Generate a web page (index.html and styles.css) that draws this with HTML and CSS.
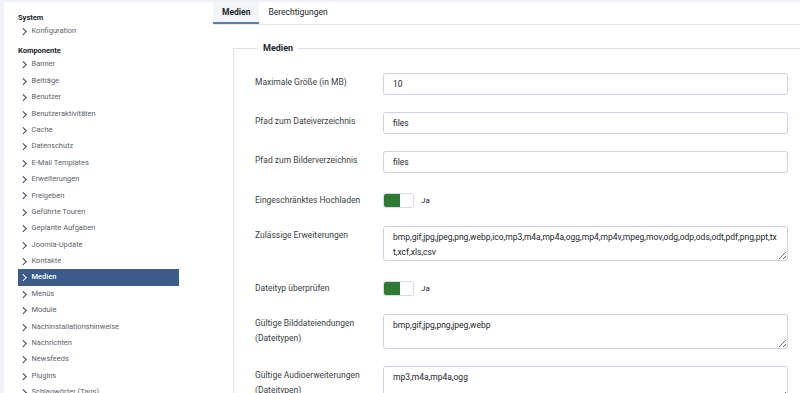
FILE: index.html
```html
<!DOCTYPE html>
<html lang="de">
<head>
    <meta charset="UTF-8">
    <title>Globale Konfiguration: Medien</title>
    <link rel="stylesheet" href="styles.css">
</head>
<body>
    <div class="page">
        <div class="sidebar">
            <h4>System</h4>
            <ul>
                <li><a href="">Konfiguration</a></li>
            </ul>
            <h4>Komponente</h4>
            <ul>
                <li><a href="">Banner</a></li>
                <li><a href="">Beiträge</a></li>
                <li><a href="">Benutzer</a></li>
                <li><a href="">Benutzeraktivitäten</a></li>
                <li><a href="">Cache</a></li>
                <li><a href="">Datenschutz</a></li>
                <li><a href="">E-Mail Templates</a></li>
                <li><a href="">Erweiterungen</a></li>
                <li><a href="">Freigeben</a></li>
                <li><a href="">Geführte Touren</a></li>
                <li><a href="">Geplante Aufgaben</a></li>
                <li><a href="">Joomla-Update</a></li>
                <li><a href="">Kontakte</a></li>
                <li class="active"><a href="">Medien</a></li>
                <li><a href="">Menüs</a></li>
                <li><a href="">Module</a></li>
                <li><a href="">Nachinstallationshinweise</a></li>
                <li><a href="">Nachrichten</a></li>
                <li><a href="">Newsfeeds</a></li>
                <li><a href="">Plugins</a></li>
                <li><a href="">Schlagwörter (Tags)</a></li>
            </ul>
        </div>
        <div class="main">
            <div class="tabs">
                <span class="tab current">Medien</span>
                <span class="tab">Berechtigungen</span>
            </div>
            <fieldset class="options">
                <legend>Medien</legend>
                <div class="row">
                    <label>Maximale Größe (in MB)</label>
                    <input type="text" value="10">
                </div>
                <div class="row">
                    <label>Pfad zum Dateiverzeichnis</label>
                    <input type="text" value="files">
                </div>
                <div class="row">
                    <label>Pfad zum Bilderverzeichnis</label>
                    <input type="text" value="files">
                </div>
                <div class="row toggle">
                    <label>Eingeschränktes Hochladen</label>
                    <div class="switch"><span class="track"><span class="on"></span></span>Ja</div>
                </div>
                <div class="row">
                    <label>Zulässige Erweiterungen</label>
                    <textarea rows="2">bmp,gif,jpg,jpeg,png,webp,ico,mp3,m4a,mp4a,ogg,mp4,mp4v,mpeg,mov,odg,odp,ods,odt,pdf,png,ppt,txt,xcf,xls,csv</textarea>
                </div>
                <div class="row toggle">
                    <label>Dateityp überprüfen</label>
                    <div class="switch"><span class="track"><span class="on"></span></span>Ja</div>
                </div>
                <div class="row">
                    <label>Gültige Bilddateiendungen<br>(Dateitypen)</label>
                    <textarea rows="2">bmp,gif,jpg,png,jpeg,webp</textarea>
                </div>
                <div class="row">
                    <label>Gültige Audioerweiterungen<br>(Dateitypen)</label>
                    <textarea rows="2">mp3,m4a,mp4a,ogg</textarea>
                </div>
            </fieldset>
        </div>
    </div>
</body>
</html>
```

FILE: styles.css
```css
*{
    margin:0;
    padding:0;
    box-sizing:border-box;
}
html,body{
    height:100%;
    overflow:hidden;
}
body{
    background:#eef2f8;
    font-family:Roboto,"Liberation Sans",sans-serif;
    color:#22262a;
}
.page{
    display:flex;
    height:100%;
    margin:2px 0 0 4px;
    background:#fff;
}
.sidebar{
    width:193px;
    flex:none;
    padding:10px 18px 0 14px;
    background:#fff;
}
.sidebar h4{
    font-size:7.5px;
    font-weight:700;
    line-height:11px;
    color:#22262a;
}
.sidebar ul{
    list-style:none;
    margin-bottom:6px;
}
.sidebar li{
    height:16.4px;
    line-height:16.4px;
}
.sidebar li a{
    display:flex;
    align-items:center;
    height:100%;
    padding-left:3px;
    font-size:7.5px;
    color:#5e636a;
    text-decoration:none;
}
.sidebar li a:before{
    content:"";
    width:3.5px;
    height:3.5px;
    border-right:1.3px solid #3a3f46;
    border-top:1.3px solid #3a3f46;
    transform:rotate(45deg);
    margin-right:6px;
}
.sidebar li.active a{
    background:#3b5b88;
    color:#fff;
    font-weight:500;
}
.sidebar li.active a:before{
    border-color:#fff;
}
.main{
    flex:1;
    margin-left:16px;
    overflow:hidden;
    background:#fff;
}
.tabs{
    display:flex;
    height:23px;
    border-bottom:1px solid #e2e7ef;
}
.tab{
    padding:0 9px;
    font-size:8.5px;
    line-height:21px;
    color:#22262a;
}
.tab.current{
    font-weight:700;
    background:#f3f5f9;
    border-bottom:2px solid #5a7db8;
}
.options{
    margin:18px -20px 0 20px;
    padding:20px 0 0 21px;
    border:1px solid #dde2ea;
    border-bottom:none;
    min-height:400px;
}
.options legend{
    margin-left:3px;
    padding:0 5px;
    font-size:9px;
    line-height:10px;
    font-weight:700;
    color:#22262a;
}
.row{
    display:flex;
    align-items:flex-start;
    margin-bottom:17px;
}
.row.toggle{
    align-items:center;
    min-height:20px;
    margin-bottom:16px;
}
.row label{
    width:128px;
    flex:none;
    padding-top:2px;
    font-size:8.5px;
    line-height:15px;
    color:#3a3f46;
}
.row.toggle label{
    padding-top:0;
}
.row input,.row textarea{
    width:405px;
    height:22px;
    padding:0 9px;
    border:1px solid #c9d3e1;
    border-radius:3px;
    font-family:Roboto,"Liberation Sans",sans-serif;
    font-size:8.5px;
    color:#22262a;
    background:#fff;
}
.row textarea{
    height:35px;
    padding:3px 9px;
    line-height:15px;
    resize:vertical;
    overflow:hidden;
}
.switch{
    display:flex;
    align-items:center;
    font-size:8px;
    color:#22262a;
}
.track{
    display:block;
    width:31px;
    height:15px;
    border:1px solid #d4dce8;
    border-radius:3px;
    margin-right:7px;
    background:#fff;
    overflow:hidden;
}
.track .on{
    display:block;
    width:16px;
    height:100%;
    background:#2e7a32;
}
```
